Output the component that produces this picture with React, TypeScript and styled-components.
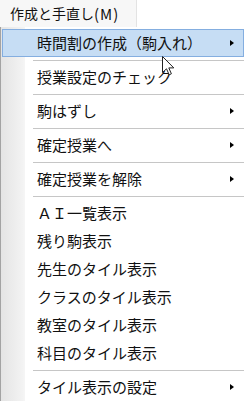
import React from "react";
import styled, { createGlobalStyle } from "styled-components";

const Global = createGlobalStyle`
  html, body { margin: 0; padding: 0; background: #ffffff; }
  body {
    width: 245px;
    height: 401px;
    overflow: hidden;
    font-family: "Noto Sans CJK JP", "Noto Sans", sans-serif;
    color: #111111;
  }
`;

const Page = styled.div`
  position: relative;
  width: 245px;
  height: 401px;
  display: flex;
  flex-direction: column;
  background: #ffffff;
`;

const TitleTab = styled.div`
  width: 137px;
  height: 27px;
  box-sizing: border-box;
  display: flex;
  align-items: center;
  padding: 0 0 1px 10px;
  background: #f7f7f7;
  border-right: 1px solid #e3e3e3;
  font-size: 14px;
  line-height: 1;
  color: #111111;
  white-space: nowrap;
`;

const Mnemonic = styled.span`
  font-size: 15px;
  letter-spacing: 1px;
`;

const Panel = styled.div`
  flex: 1;
  display: flex;
  flex-direction: column;
  padding: 2px 1px 0 1px;
  border-left: 1px solid #a3a3a3;
  background: linear-gradient(
    to right,
    #e4e4e4 0px,
    #f3f3f3 22px,
    #f6f6f6 24px,
    #ffffff 24px
  );
`;

const Item = styled.div<{ $active?: boolean }>`
  height: 28px;
  box-sizing: border-box;
  display: flex;
  align-items: center;
  padding: 0 9px 1px 34px;
  border: 1px solid ${(p) => (p.$active ? "#84aee0" : "transparent")};
  background: ${(p) => (p.$active ? "#c6ddf4" : "transparent")};
  font-size: 15px;
  line-height: 1;
  color: #111111;
  white-space: nowrap;
`;

const Label = styled.span`
  flex: 1;
`;

const SubArrow = styled.span`
  width: 0;
  height: 0;
  border-top: 3.5px solid transparent;
  border-bottom: 3.5px solid transparent;
  border-left: 4px solid #000000;
`;

const Separator = styled.div`
  height: 1px;
  margin: 3px 0 2px 31px;
  background: #c6c6c6;
`;

const Cursor = styled.svg`
  position: absolute;
  left: 162px;
  top: 56px;
  width: 13px;
  height: 20px;
  pointer-events: none;
`;

type Entry =
  | { kind: "item"; label: string; sub?: boolean; active?: boolean }
  | { kind: "sep" };

const entries: Entry[] = [
  { kind: "item", label: "時間割の作成（駒入れ）", sub: true, active: true },
  { kind: "sep" },
  { kind: "item", label: "授業設定のチェック" },
  { kind: "sep" },
  { kind: "item", label: "駒はずし", sub: true },
  { kind: "sep" },
  { kind: "item", label: "確定授業へ", sub: true },
  { kind: "sep" },
  { kind: "item", label: "確定授業を解除", sub: true },
  { kind: "sep" },
  { kind: "item", label: "ＡＩ一覧表示" },
  { kind: "item", label: "残り駒表示" },
  { kind: "item", label: "先生のタイル表示" },
  { kind: "item", label: "クラスのタイル表示" },
  { kind: "item", label: "教室のタイル表示" },
  { kind: "item", label: "科目のタイル表示" },
  { kind: "sep" },
  { kind: "item", label: "タイル表示の設定", sub: true },
];

export default function App() {
  return (
    <Page>
      <Global />
      <TitleTab>
        作成と手直し<Mnemonic>(M)</Mnemonic>
      </TitleTab>
      <Panel>
        {entries.map((e, i) =>
          e.kind === "sep" ? (
            <Separator key={i} />
          ) : (
            <Item key={i} $active={e.active}>
              <Label>{e.label}</Label>
              {e.sub && <SubArrow />}
            </Item>
          )
        )}
      </Panel>
      <Cursor viewBox="0 0 13 20">
        <path
          d="M0.5 0.5 L0.5 16.5 L4.5 12.8 L7.2 18.8 L9.4 17.8 L6.8 11.9 L11.8 11.9 Z"
          fill="#ffffff"
          stroke="#222222"
          strokeWidth="1"
          strokeLinejoin="miter"
        />
      </Cursor>
    </Page>
  );
}
